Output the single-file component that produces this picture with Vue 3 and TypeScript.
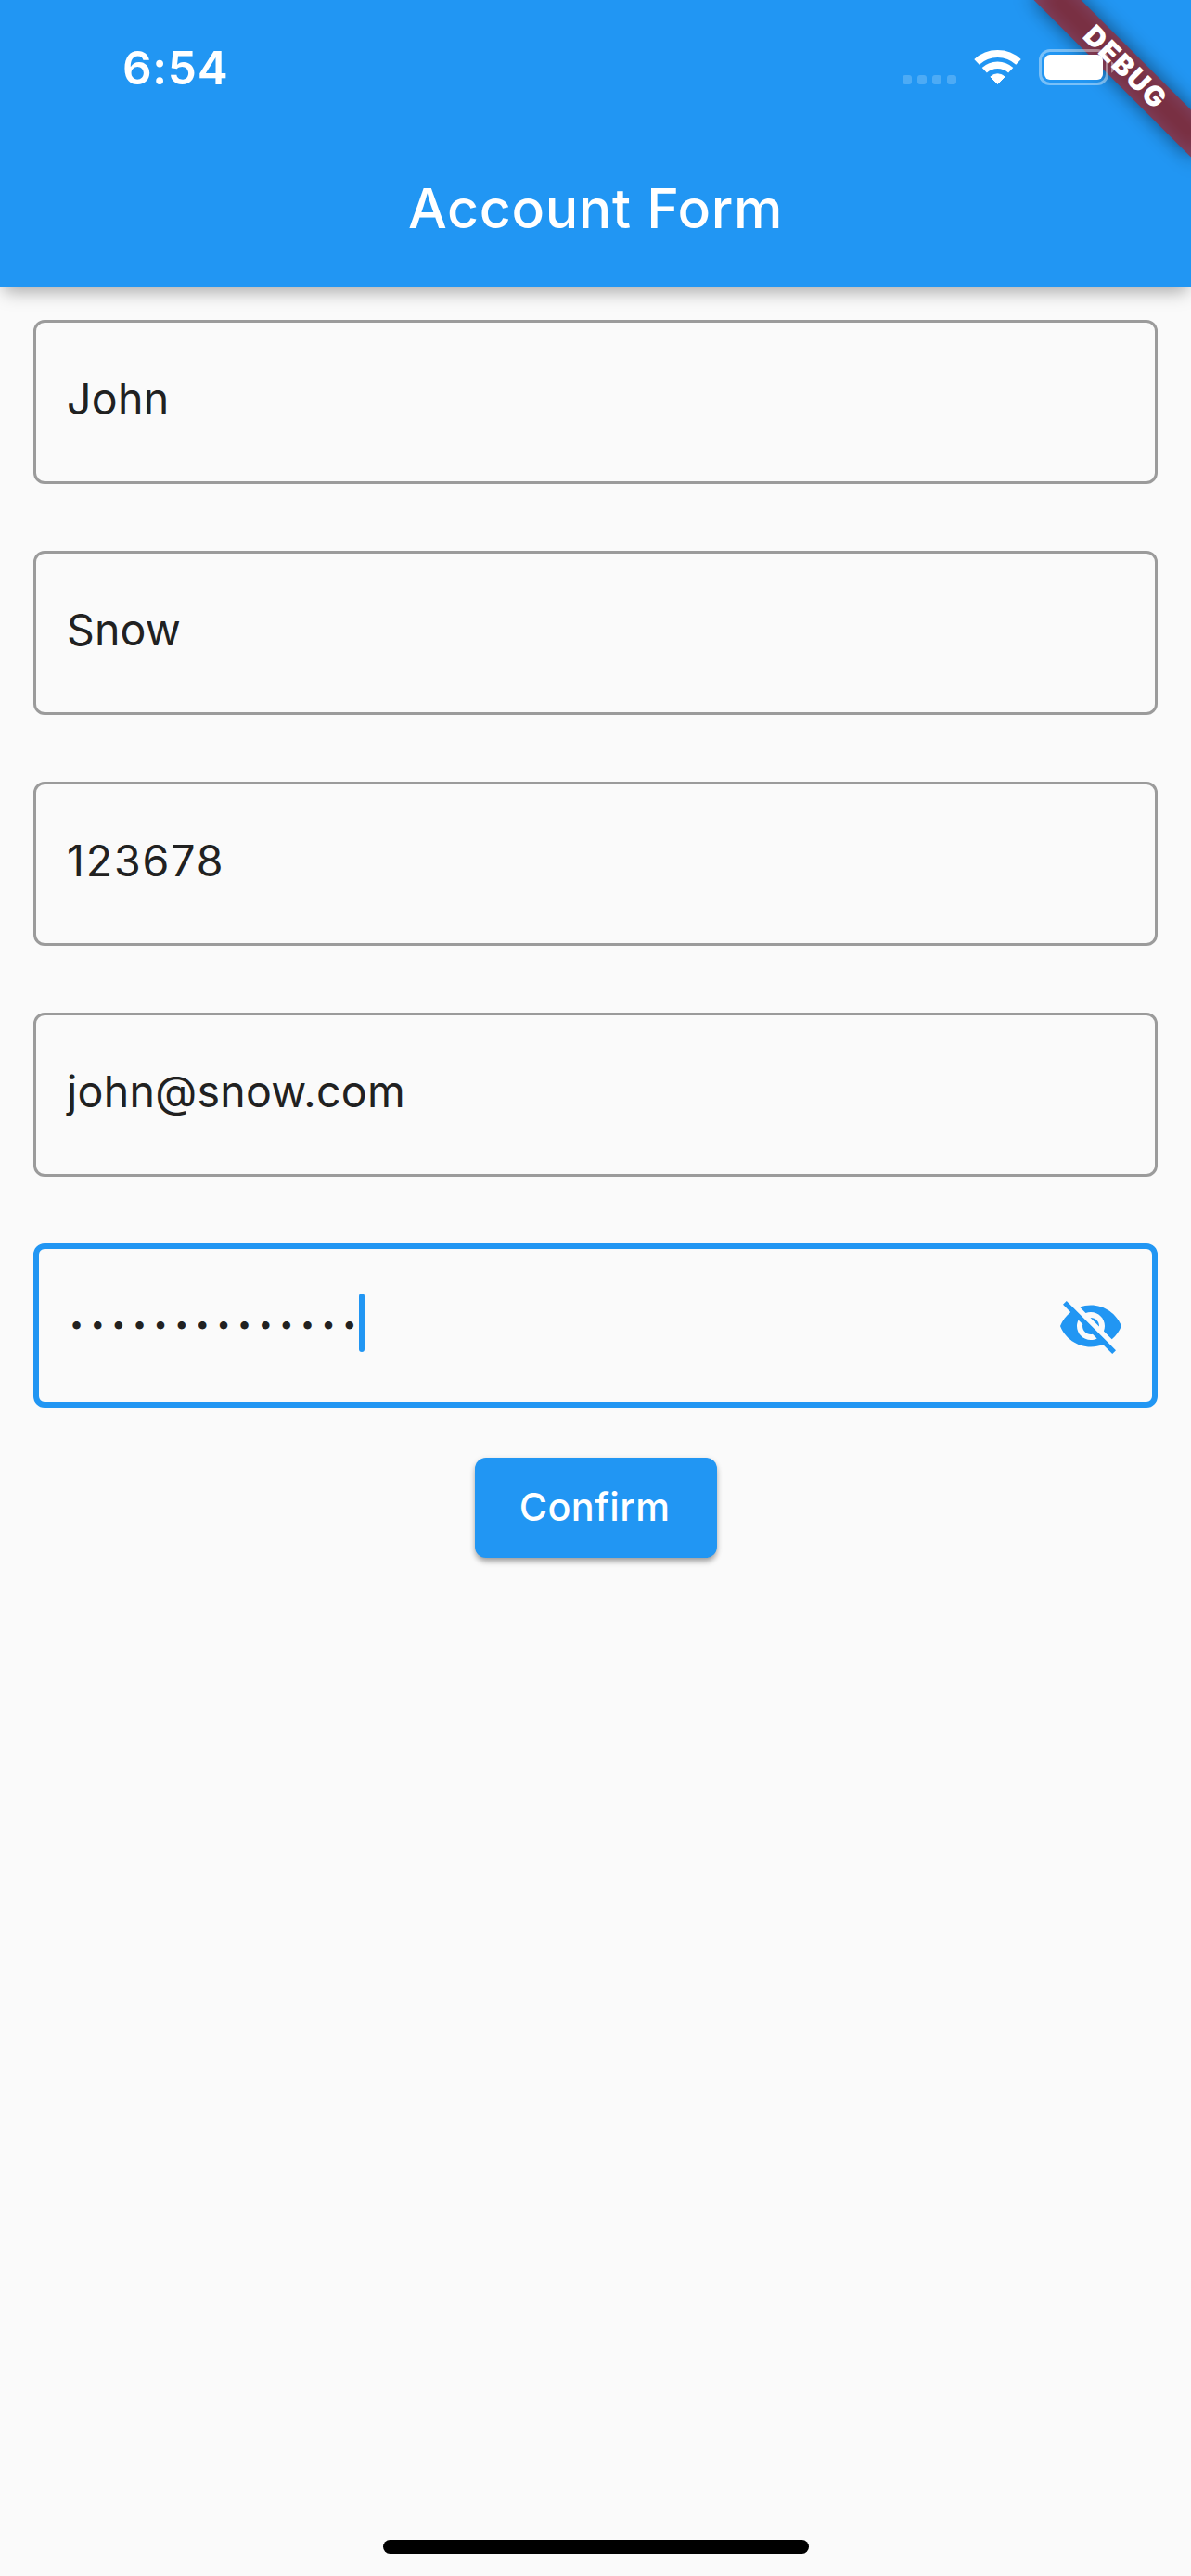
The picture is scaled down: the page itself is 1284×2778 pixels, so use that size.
<script setup lang="ts">
import { ref } from 'vue'

interface Field {
  id: string
  value: string
}

const fields: Field[] = [
  { id: 'first', value: 'John' },
  { id: 'last', value: 'Snow' },
  { id: 'number', value: '123678' },
  { id: 'email', value: 'john@snow.com' },
]

const passwordLength = ref(14)
</script>

<template>
  <div class="screen">
    <header class="app-bar">
      <div class="status-bar">
        <span class="time">6:54</span>
        <div class="indicators">
          <div class="signal"><i v-for="n in 4" :key="n"></i></div>
          <svg class="wifi" width="52" height="38" viewBox="0 0 52 38" fill="none" stroke="#fff">
            <path d="M3 12.9A33 33 0 0 1 48 12.9" stroke-width="8" />
            <path d="M11.3 21.8A20.8 20.8 0 0 1 39.7 21.8" stroke-width="7.6" />
            <path d="M25.5 36.6L17.9 28.8A11.2 11.2 0 0 1 33.1 28.8Z" fill="#fff" stroke-width="1" stroke-linejoin="round" />
          </svg>
          <svg class="battery" width="84" height="39" viewBox="0 0 84 39">
            <rect x="1.5" y="1.5" width="72" height="36" rx="10.5" fill="none" stroke="#fff" stroke-opacity=".4" stroke-width="3" />
            <rect x="6" y="6" width="63" height="27" rx="6" fill="#fff" />
            <path d="M78 13.2C83 15.5 83 23.5 78 25.8Z" fill="#fff" fill-opacity=".4" />
          </svg>
        </div>
      </div>
      <h1 class="title">Account Form</h1>
    </header>

    <div class="banner-area"><div class="banner"><span>DEBUG</span></div></div>

    <main class="form">
      <div v-for="f in fields" :key="f.id" class="field" :class="f.id">{{ f.value }}</div>
      <div class="field focused">
        <span class="dots">{{ '•'.repeat(passwordLength) }}</span>
        <span class="caret"></span>
        <svg class="eye" width="72" height="72" viewBox="0 0 24 24" fill="#2196f3">
          <path d="M12 7c2.76 0 5 2.24 5 5 0 .65-.13 1.26-.36 1.83l2.92 2.92c1.51-1.26 2.7-2.89 3.43-4.75-1.73-4.39-6-7.5-11-7.5-1.4 0-2.74.25-3.98.7l2.16 2.16C10.74 7.13 11.35 7 12 7zM2 4.27l2.28 2.28.46.46C3.08 8.3 1.78 10.02 1 12c1.73 4.39 6 7.5 11 7.5 1.55 0 3.03-.3 4.38-.84l.42.42L19.73 22 21 20.73 3.27 3 2 4.27zM7.53 9.8l1.55 1.55c-.05.21-.08.43-.08.65 0 1.66 1.34 3 3 3 .22 0 .44-.03.65-.08l1.55 1.55c-.67.33-1.41.53-2.2.53-2.76 0-5-2.24-5-5 0-.79.2-1.53.53-2.2zm4.31-.78l3.15 3.15.02-.16c0-1.66-1.34-3-3-3l-.17.01z" />
        </svg>
      </div>
      <button class="confirm" type="button">Confirm</button>
    </main>

    <div class="home-indicator"></div>
  </div>
</template>

<style>
body {
  background: #fafafa;
}
</style>

<style scoped>
.screen {
  position: relative;
  display: flex;
  flex-direction: column;
  align-items: center;
  width: 1284px;
  height: 2778px;
  overflow: hidden;
  background: #fafafa;
  font-family: Inter, "Liberation Sans", sans-serif;
}

.app-bar {
  width: 100%;
  height: 309px;
  flex: none;
  background: #2196f3;
  box-shadow: 0 9px 18px -4px rgba(0, 0, 0, 0.35);
  color: #fff;
}

.status-bar {
  position: relative;
  z-index: 2;
  display: flex;
  justify-content: space-between;
  box-sizing: border-box;
  height: 141px;
  padding: 53px 80px 0 132px;
}

.time {
  font-size: 49.5px;
  font-weight: 560;
  line-height: 40px;
  letter-spacing: 0.7px;
}

.indicators {
  display: flex;
  align-items: flex-start;
}

.signal {
  display: flex;
  gap: 6px;
  margin: 28px 21px 0 0;
}

.signal i {
  width: 10px;
  height: 10px;
  border-radius: 3px;
  background: rgba(255, 255, 255, 0.2);
}

.wifi {
  margin: 1px 18px 0 -2px;
}

.title {
  margin: 0;
  padding-left: 0;
  font-size: 59px;
  font-weight: 500;
  line-height: 168px;
  letter-spacing: 0.67px;
  text-align: center;
}

.banner-area {
  position: absolute;
  z-index: 1;
  top: 0;
  right: 0;
  width: 300px;
  height: 300px;
  overflow: hidden;
}

/* ribbon across the corner, over its own soft shadow */
.banner {
  position: absolute;
  top: 54.1px;
  right: -47.9px;
  width: 240px;
  height: 36px;
  transform: rotate(45deg);
  color: #fff;
  font-size: 29.9px;
  font-weight: 900;
  line-height: 34px;
  letter-spacing: 1.8px;
  text-align: center;
}

.banner::before,
.banner::after {
  content: "";
  position: absolute;
  inset: 0;
}

.banner::before {
  background: rgba(0, 0, 0, 0.5);
  filter: blur(10.9px);
}

.banner::after {
  background: rgba(183, 28, 28, 0.627);
}

.banner span {
  position: relative;
  z-index: 1;
  padding-left: 3px;
}

.form {
  display: flex;
  flex-direction: column;
  align-items: center;
  gap: 72px;
  margin-top: 36px;
}

.field {
  display: flex;
  align-items: center;
  box-sizing: border-box;
  width: 1212px;
  height: 177px;
  padding: 0 33px 7px;
  border: 3px solid #9b9b9b;
  border-radius: 12px;
  color: #212121;
  font-size: 46.5px;
  line-height: 57px;
}

.first {
  letter-spacing: 0.3px;
}

.last {
  letter-spacing: 0.1px;
}

.number {
  letter-spacing: 1.85px;
}

.email {
  letter-spacing: 0.28px;
}

.focused {
  padding: 0 30px;
  border: 6px solid #2196f3;
}

.dots {
  width: 315px;
  padding: 0 0 4px 3px;
  box-sizing: border-box;
  font-size: 26.8px;
  letter-spacing: 7.56px;
  line-height: 57px;
  white-space: nowrap;
}

.caret {
  width: 6px;
  height: 63px;
  margin-bottom: 6px;
  border-radius: 3px;
  background: #2196f3;
}

.eye {
  margin-left: auto;
}

.confirm {
  width: 261px;
  height: 108px;
  margin-top: -18px;
  padding: 0 2px 2px 0;
  border: 0;
  border-radius: 12px;
  background: #2196f3;
  box-shadow: 0 5px 6px -1px rgba(0, 0, 0, 0.28), 0 2px 6px rgba(0, 0, 0, 0.16);
  color: #fff;
  font-family: inherit;
  font-size: 41.4px;
  font-weight: 500;
  letter-spacing: 0.4px;
}

.home-indicator {
  width: 459px;
  height: 15px;
  margin: auto 0 24px;
  border-radius: 8px;
  background: #000;
}
</style>
